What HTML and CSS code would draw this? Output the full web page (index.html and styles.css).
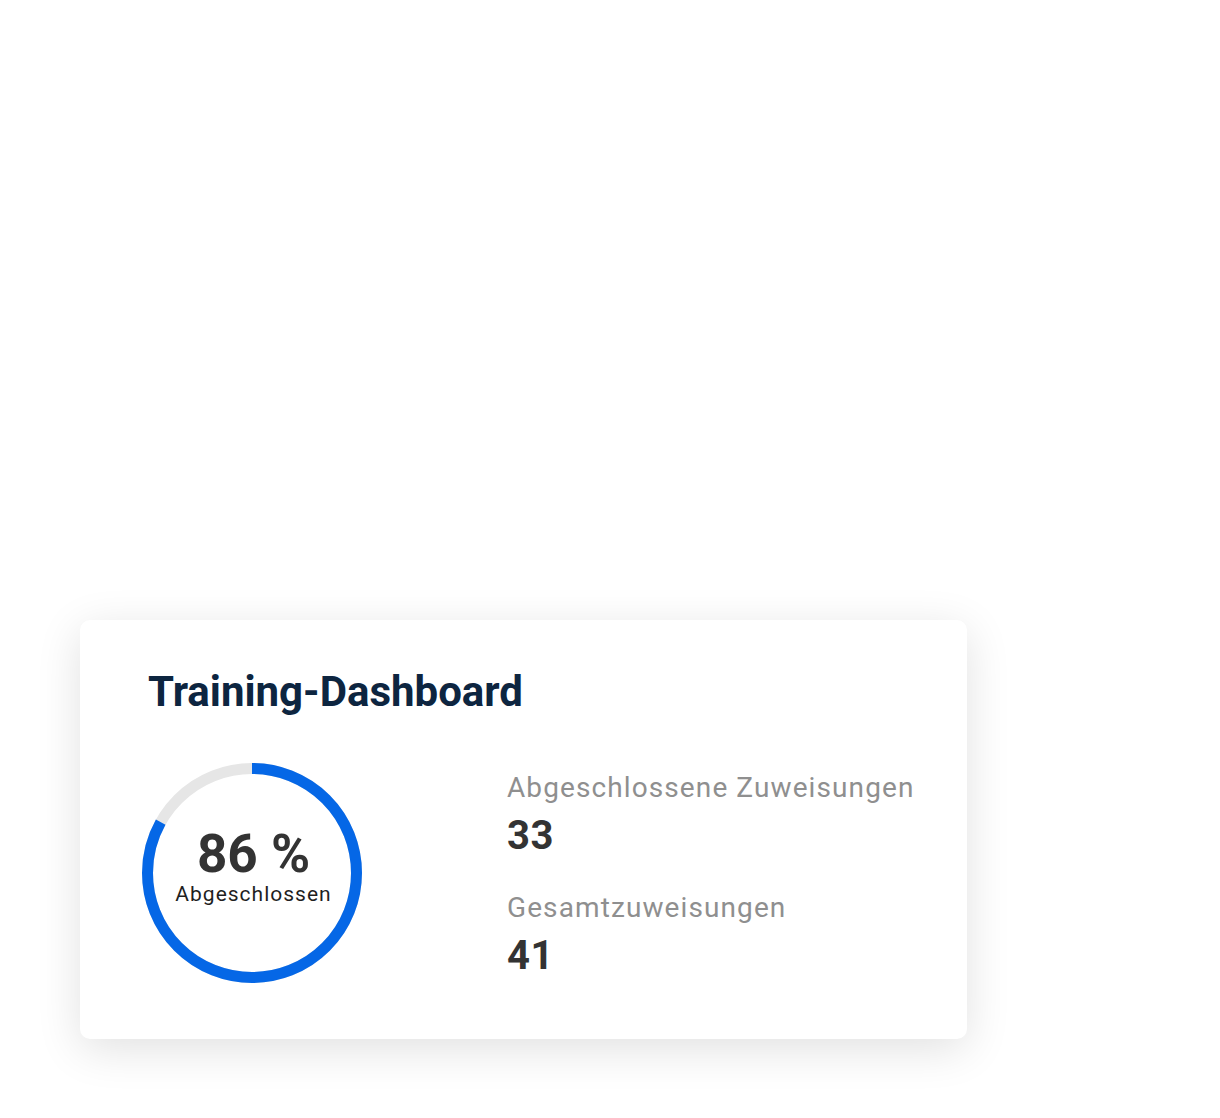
FILE: index.html
```html
<!DOCTYPE html>
<html lang="de">
  <head>
    <meta charset="UTF-8" />
    <meta name="viewport" content="width=device-width, initial-scale=1.0" />
    <title>Training-Dashboard</title>
    <link rel="stylesheet" href="styles.css">
  </head>
  <body>
    <div class="page">
      <div class="card">
        <h1 class="card__title">Training-Dashboard</h1>
        <div class="card__body">
          <div class="donut">
            <svg class="donut__ring" width="222" height="222" viewBox="0 0 222 222">
              <!-- track -->
              <circle cx="111" cy="111" r="104.5" fill="none" stroke="#e6e6e6" stroke-width="11" />
              <!-- progress, starts at 12 o'clock and runs clockwise -->
              <circle cx="111" cy="111" r="104.5" fill="none" stroke="#0567e6" stroke-width="11"
                stroke-dasharray="545 656.6" transform="rotate(-90 111 111)" />
            </svg>
            <div class="donut__label">
              <span class="donut__value">86 %</span>
              <span class="donut__text">Abgeschlossen</span>
            </div>
          </div>
          <div class="stats">
            <div class="stats__item">
              <div class="stats__label">Abgeschlossene Zuweisungen</div>
              <div class="stats__value">33</div>
            </div>
            <div class="stats__item">
              <div class="stats__label">Gesamtzuweisungen</div>
              <div class="stats__value">41</div>
            </div>
          </div>
        </div>
      </div>
    </div>
  </body>
</html>
```

FILE: styles.css
```css
body {
  font-family: "Roboto", "Liberation Sans", sans-serif;
  margin: 0;
  padding: 0;
  background-color: #fff;
}

.page {
  padding: 620px 0 79px 80px;
}

.card {
  box-sizing: border-box;
  width: 887px;
  height: 419px;
  background-color: #fff;
  border-radius: 10px;
  box-shadow: 0 10px 45px rgba(0, 0, 0, 0.12);
  padding: 47px 0 0 68px;
}

.card__title {
  margin: 0;
  font-size: 42px;
  font-weight: 700;
  line-height: 50px;
  color: #0d2540;
}

.card__body {
  display: flex;
  align-items: center;
  margin-top: 45px;
}

.donut {
  position: relative;
  width: 222px;
  height: 222px;
  margin-left: -7.5px;
}

.donut__ring {
  display: block;
}

/* text sits over the ring */
.donut__label {
  position: absolute;
  top: 0;
  left: 0;
  width: 100%;
  height: 100%;
  display: flex;
  flex-direction: column;
  align-items: center;
  justify-content: center;
  padding: 0 0 14px 4px;
  box-sizing: border-box;
}

.donut__value {
  font-size: 53px;
  font-weight: 700;
  line-height: 56px;
  color: #333;
}

.donut__text {
  font-size: 21px;
  line-height: 24px;
  letter-spacing: 1px;
  color: #1f1f1f;
}

.stats {
  margin: 4px 0 0 144.5px;
  display: flex;
  flex-direction: column;
  gap: 33px;
}

.stats__label {
  font-size: 28px;
  line-height: 32px;
  letter-spacing: 1.1px;
  color: #8f8f8f;
}

.stats__value {
  margin-top: 9px;
  font-size: 40px;
  font-weight: 700;
  line-height: 46px;
  letter-spacing: 0.5px;
  color: #333;
}
```
